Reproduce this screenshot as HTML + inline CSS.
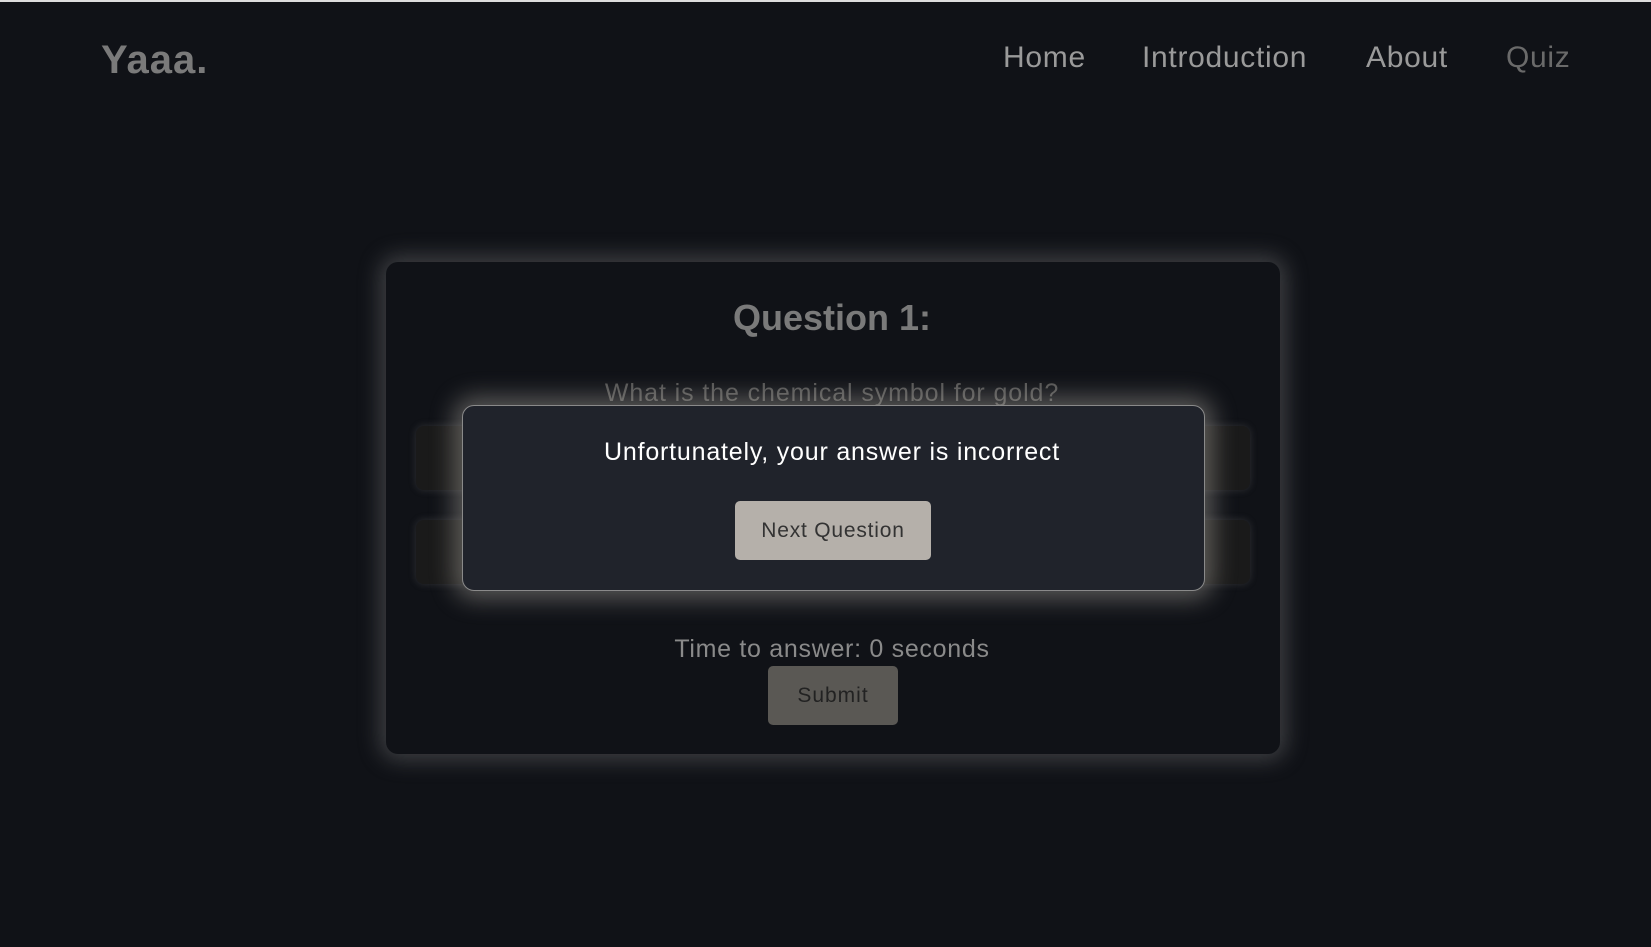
<!DOCTYPE html>
<html><head><meta charset="utf-8"><style>
*{margin:0;padding:0;box-sizing:border-box}
html,body{width:1651px;height:947px;overflow:hidden;background:#101217;font-family:"Liberation Sans",sans-serif}
.top{position:absolute;left:0;top:0;width:1651px;height:2px;background:#ddd}
.logo{position:absolute;left:101px;top:38px;font-size:40px;font-weight:bold;color:#7a7a7a;letter-spacing:1px}
.nav a{position:absolute;top:41px;font-size:30px;color:#9a9a9a;text-decoration:none;letter-spacing:0.7px}
.card{position:absolute;left:386px;top:262px;width:894px;height:492px;border-radius:12px;background:#101217;box-shadow:0 0 22px 6px rgba(150,150,150,.35)}
.c{position:absolute;left:0;width:1664px;text-align:center;white-space:nowrap}
.opt{position:absolute;left:416px;width:834px;height:64px;border-radius:8px;background:#1a1a1a;box-shadow:0 0 8px rgba(120,120,120,.3)}
.modal{position:absolute;left:462px;top:405px;width:743px;height:186px;border-radius:12px;background:#20232b;border:1px solid #8a8a8a;box-shadow:0 0 24px 8px rgba(200,195,185,.4)}
.btn{position:absolute;border-radius:5px;text-align:center;font-size:21px}
</style></head><body>
<div class="top"></div>
<div class="logo">Yaaa.</div>
<div class="nav"><a style="left:1003px">Home</a><a style="left:1142px">Introduction</a><a style="left:1366px">About</a><a style="left:1506px;color:#6a6a6a">Quiz</a></div>
<div class="card"></div>
<div class="c" style="top:297px;font-size:36px;font-weight:bold;color:#7a7a7a">Question 1:</div>
<div class="c" style="top:379px;font-size:25px;color:#555;letter-spacing:0.9px">What is the chemical symbol for gold?</div>
<div class="opt" style="top:426px"></div>
<div class="opt" style="top:520px"></div>
<div class="modal"></div>
<div class="c" style="top:438px;font-size:25px;color:#fff;letter-spacing:0.8px">Unfortunately, your answer is incorrect</div>
<div class="btn" style="left:735px;top:501px;width:196px;height:59px;line-height:59px;background:#b5b0aa;color:#333;letter-spacing:0.8px">Next Question</div>
<div class="c" style="top:635px;font-size:25px;color:#8a8a8a;letter-spacing:0.7px">Time to answer: 0 seconds</div>
<div class="btn" style="left:768px;top:666px;width:130px;height:59px;line-height:59px;background:#5a5854;color:#222;letter-spacing:1px">Submit</div>
</body></html>
